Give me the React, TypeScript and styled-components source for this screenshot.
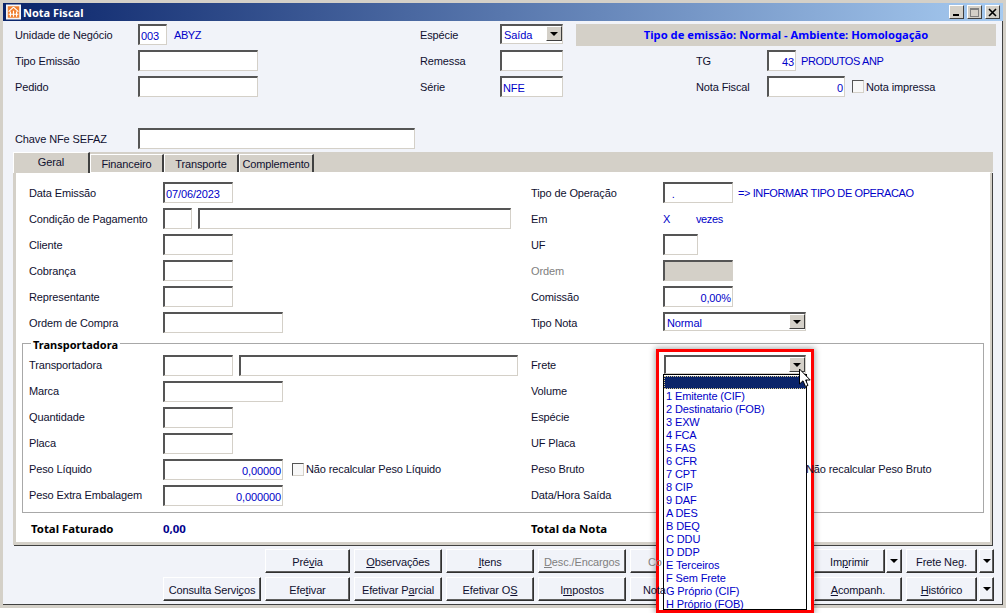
import React from "react";
import styled, { createGlobalStyle } from "styled-components";

const Global = createGlobalStyle`
  html, body { margin: 0; padding: 0; background: #fff; height: 100%; }
  body { font-family: "Liberation Sans", "Noto Sans", sans-serif; font-size: 11px; letter-spacing: -0.12px; color: #101030; overflow: hidden; }
  * { box-sizing: border-box; }
`;

const Win = styled.div`
  position: relative; width: 1006px; height: 608px; background: #f1f3f9;
  border: 3px solid #d4d0c8; box-shadow: inset -1px -1px 0 #404040;
`;
const TitleBar = styled.div`
  display: flex; align-items: center; height: 18px; padding-left: 3px; gap: 2px;
  background: linear-gradient(90deg, #0a246a, #a6caf0);
`;
const TitleText = styled.span`color: #fff; font-family: "Noto Sans", sans-serif; font-weight: 700; font-size: 11px; letter-spacing: 0; flex: 1;`;
const TitleButtons = styled.div`display: flex; gap: 3px; margin-right: 3px;`;
const TitleBtn = styled.div`
  width: 15px; height: 14px; background: #d4d0c8; border: 1px solid; border-color: #fff #404040 #404040 #fff;
  display: flex; align-items: center; justify-content: center;
`;
const HeaderForm = styled.div`padding: 3px 0 0 12px;`;
const HeaderRow = styled.div<{ $h?: number }>`
  display: grid; grid-template-columns: 405px 156px 420px; height: ${p => p.$h ?? 26}px;
`;
const Cell = styled.div`display: flex; align-items: flex-start;`;
const RightCell = styled(Cell)`padding-left: 120px;`;
const Label = styled.div<{ $w: number; $muted?: boolean; $above?: boolean }>`
  width: ${p => p.$w}px; line-height: 23px; flex: none; white-space: nowrap; color: ${p => (p.$muted ? "#808080" : "#101030")};
  ${p => p.$above && "position: relative; z-index: 6;"}
`;
const Field = styled.div<{ $w: number; $right?: boolean; $h?: number; $grey?: boolean; $ml?: number }>`
  width: ${p => p.$w}px; height: ${p => p.$h ?? 21}px; flex: none; margin-left: ${p => p.$ml ?? 0}px;
  background: ${p => (p.$grey ? "#d4d0c8" : "#fff")};
  border: solid; border-color: #555 #d4d0c8 #d4d0c8 #555; border-width: 2px 1px 1px 2px;
  line-height: 20px; padding: 0 1px; color: #0000c8; white-space: nowrap; overflow: hidden;
  text-align: ${p => (p.$right ? "right" : "left")};
`;
const Value = styled.span<{ $ml?: number; $w?: number }>`
  color: #0000c8; line-height: 23px; letter-spacing: -0.4px; white-space: nowrap; margin-left: ${p => p.$ml ?? 0}px;
  ${p => (p.$w ? `width:${p.$w}px;` : "")}
`;
const Select = styled(Field)`
  position: relative; line-height: 18px; padding-left: 2px;
`;
const DropButton = styled.div`
  position: absolute; right: 0; top: 0; width: 16px; height: 15px; background: #d4d0c8;
  border: 1px solid; border-color: #fff #404040 #404040 #fff;
  display: flex; align-items: center; justify-content: center;
`;
const Arrow = styled.i`
  display: block; width: 0; height: 0; border: 4px solid transparent; border-top: 4px solid #000; border-bottom: 0;
`;
const Check = styled.div<{ $ml: number }>`
  width: 12px; height: 13px; flex: none; margin: 4px 2px 0 ${p => p.$ml}px; background: #f8f8f8;
  border: 1px solid; border-color: #555 #d4d0c8 #d4d0c8 #555;
`;
const Banner = styled.div`
  width: 420px; height: 22px; background: #d4d0c8; color: #0000ff; font-family: "Noto Sans", sans-serif; font-weight: 700; font-size: 11.2px;
  letter-spacing: 0; line-height: 22px; text-align: center;
`;
const TabStrip = styled.div`
  display: flex; align-items: flex-end; height: 20px; margin: 0 0 0 10px; width: 980px; background: #d4d0c8;
`;
const Tab = styled.div<{ $w: number; $active?: boolean }>`
  width: ${p => p.$w}px; height: ${p => (p.$active ? 21 : 18)}px; flex: none; text-align: center;
  background: #d4d0c8; border-top: 1px solid #fff; border-left: 1px solid #fff; border-right: 2px solid #404040;
  line-height: 18px; ${p => p.$active && "align-self: flex-start; position: relative; z-index: 1;"}
`;
const Panel = styled.div`
  margin-left: 10px; width: 979px; height: 373px; background: #fff; padding-top: 9px;
  border: solid #d4d0c8; border-width: 1px 2px 3px 3px; box-shadow: 1px 1px 0 #404040;
  border-top-color: #fff;
`;
const FormRow = styled.div`
  display: grid; grid-template-columns: 502px 1fr; height: 26px; padding-left: 13px;
`;
const Group = styled.div`
  position: relative; height: 170px; margin: 5px 6px 0; padding-top: 11px; border: 1px solid #a8a8a8;
`;
const GroupRow = styled(FormRow)`
  padding-left: 6px;
  ${Label} { line-height: 21px; }
`;
const Legend = styled.div`
  position: absolute; left: 8px; top: -6px; background: #fff; padding: 0 2px; font-family: "Noto Sans", sans-serif; font-weight: 700; letter-spacing: 0; line-height: 14px; color: #000;
`;
const Totals = styled(FormRow)`height: 29px; padding-left: 15px; grid-template-columns: 500px 1fr;`;
const Bold = styled.span<{ $w?: number; $blue?: boolean }>`
  font-family: "Noto Sans", sans-serif; font-weight: 700; font-size: 11.4px; letter-spacing: 0; line-height: 31px; white-space: nowrap; color: ${p => (p.$blue ? "#00008c" : "#000")};
  ${p => (p.$w ? `width:${p.$w}px; display:inline-block;` : "")}
`;
const Bar = styled.div`display: flex; flex-direction: column; gap: 4px; margin-top: 4px;`;
const BarRow = styled.div<{ $pl: number }>`display: flex; gap: 4px; height: 24px; padding-left: ${p => p.$pl}px;`;
const Split = styled.div<{ $gap: number }>`display: flex; gap: ${p => p.$gap}px;`;
const Btn = styled.div<{ $w: number; $off?: boolean; $indent?: number }>`
  width: ${p => p.$w}px; height: 24px; background: #f1f3f9; flex: none; white-space: nowrap;
  text-align: ${p => (p.$indent ? "left" : "center")}; padding-left: ${p => p.$indent ?? 0}px;
  border: 1px solid; border-color: #fff #303030 #303030 #fff; box-shadow: inset -1px -1px 0 #606060;
  line-height: 24px; color: ${p => (p.$off ? "#808080" : "#101030")};
`;
const ArrowBtn = styled(Btn)`display: flex; align-items: center; justify-content: center;`;
const OverText = styled.span`position: relative; z-index: 6;`;
const Overlay = styled.div`
  position: absolute; left: 653px; top: 346px; width: 158px; height: 264px; background: #fff; z-index: 5;
  border: 3px solid #f00; box-shadow: 0 0 6px 1px rgba(0,0,0,.35); padding: 3px 0 0 5px;
`;
const List = styled.div`
  width: 144px; margin-left: -1px; border: 1px solid #000; padding-top: 1px; background: #fff; height: 236px;
`;
const Item = styled.div<{ $sel?: boolean }>`
  height: 13px; line-height: 15px; padding-left: 2px; color: #0000c8; white-space: nowrap;
  ${p => p.$sel && "background:#0a246a; outline: 1px dotted #d8c890; outline-offset: -1px;"}
`;
const Cursor = styled.svg`position: absolute; left: 795px; top: 365px; z-index: 6;`;

const frete = ["", "1 Emitente (CIF)", "2 Destinatario (FOB)", "3 EXW", "4 FCA", "5 FAS", "6 CFR", "7 CPT", "8 CIP", "9 DAF", "A DES", "B DEQ", "C DDU", "D DDP", "E Terceiros", "F Sem Frete", "G Próprio (CIF)", "H Próprio (FOB)"];

const Drop = () => <DropButton><Arrow /></DropButton>;

export default function App() {
  return (
    <>
      <Global />
      <Win>
        <TitleBar>
          <svg width="15" height="16" viewBox="0 0 17 17">
            <rect width="17" height="17" fill="#f6f6f6" />
            <rect x="2" y="2" width="13" height="13" fill="#f08030" />
            <path d="M8.5 3 L3 8 M8.5 3 L14 8 M5 8v6 M8.5 7v7 M12 8v6 M3 11h11" stroke="#fff" strokeWidth="1.3" fill="none" />
          </svg>
          <TitleText>Nota Fiscal</TitleText>
          <TitleButtons>
            <TitleBtn><svg width="9" height="9"><rect x="1" y="6" width="6" height="2" fill="#000" /></svg></TitleBtn>
            <TitleBtn><svg width="9" height="9"><rect x="0.5" y="0.5" width="8" height="8" fill="none" stroke="#808080" /><rect x="0" y="0" width="9" height="2" fill="#808080" /></svg></TitleBtn>
            <TitleBtn><svg width="9" height="9"><path d="M1 1 L8 8 M8 1 L1 8" stroke="#000" strokeWidth="1.6" /></svg></TitleBtn>
          </TitleButtons>
        </TitleBar>
        <HeaderForm>
          <HeaderRow>
            <Cell><Label $w={123}>Unidade de Negócio</Label><Field $w={29}>003</Field><Value $ml={7}>ABYZ</Value></Cell>
            <Cell><Label $w={80}>Espécie</Label><Select $w={63} $h={20}>Saída<Drop /></Select></Cell>
            <Cell><Banner>Tipo de emissão: Normal - Ambiente: Homologação</Banner></Cell>
          </HeaderRow>
          <HeaderRow>
            <Cell><Label $w={123}>Tipo Emissão</Label><Field $w={120} /></Cell>
            <Cell><Label $w={80}>Remessa</Label><Field $w={63} /></Cell>
            <RightCell><Label $w={71}>TG</Label><Field $w={29} $right>43</Field><Value $ml={5}>PRODUTOS ANP</Value></RightCell>
          </HeaderRow>
          <HeaderRow>
            <Cell><Label $w={123}>Pedido</Label><Field $w={120} /></Cell>
            <Cell><Label $w={80}>Série</Label><Field $w={63}>NFE</Field></Cell>
            <RightCell><Label $w={71}>Nota Fiscal</Label><Field $w={78} $right>0</Field><Check $ml={7} /><Label $w={80}>Nota impressa</Label></RightCell>
          </HeaderRow>
          <HeaderRow />
          <HeaderRow $h={24}>
            <Cell><Label $w={123}>Chave NFe SEFAZ</Label><Field $w={277} /></Cell>
          </HeaderRow>
        </HeaderForm>
        <TabStrip>
          <Tab $w={77} $active>Geral</Tab>
          <Tab $w={74}>Financeiro</Tab>
          <Tab $w={75}>Transporte</Tab>
          <Tab $w={75}>Complemento</Tab>
        </TabStrip>
        <Panel>
          <FormRow>
            <Cell><Label $w={134}>Data Emissão</Label><Field $w={70}>07/06/2023</Field></Cell>
            <Cell><Label $w={132}>Tipo de Operação</Label><Field $w={70}>&nbsp;&nbsp;.</Field><Value $ml={5}>=&gt; INFORMAR TIPO DE OPERACAO</Value></Cell>
          </FormRow>
          <FormRow>
            <Cell><Label $w={134}>Condição de Pagamento</Label><Field $w={29} /><Field $w={313} $ml={6} /></Cell>
            <Cell><Label $w={132}>Em</Label><Value $w={33}>X</Value><Value>vezes</Value></Cell>
          </FormRow>
          <FormRow>
            <Cell><Label $w={134}>Cliente</Label><Field $w={70} /></Cell>
            <Cell><Label $w={132}>UF</Label><Field $w={35} /></Cell>
          </FormRow>
          <FormRow>
            <Cell><Label $w={134}>Cobrança</Label><Field $w={70} /></Cell>
            <Cell><Label $w={132} $muted>Ordem</Label><Field $w={70} $grey /></Cell>
          </FormRow>
          <FormRow>
            <Cell><Label $w={134}>Representante</Label><Field $w={70} /></Cell>
            <Cell><Label $w={132}>Comissão</Label><Field $w={70} $right>0,00%</Field></Cell>
          </FormRow>
          <FormRow>
            <Cell><Label $w={134}>Ordem de Compra</Label><Field $w={120} /></Cell>
            <Cell><Label $w={132}>Tipo Nota</Label><Select $w={143} $h={19}>Normal<Drop /></Select></Cell>
          </FormRow>
          <Group>
            <Legend>Transportadora</Legend>
            <GroupRow>
              <Cell><Label $w={134}>Transportadora</Label><Field $w={70} /><Field $w={279} $ml={6} /></Cell>
              <Cell><Label $w={132}>Frete</Label></Cell>
            </GroupRow>
            <GroupRow>
              <Cell><Label $w={134}>Marca</Label><Field $w={120} /></Cell>
              <Cell><Label $w={132}>Volume</Label></Cell>
            </GroupRow>
            <GroupRow>
              <Cell><Label $w={134}>Quantidade</Label><Field $w={70} /></Cell>
              <Cell><Label $w={132}>Espécie</Label></Cell>
            </GroupRow>
            <GroupRow>
              <Cell><Label $w={134}>Placa</Label><Field $w={70} /></Cell>
              <Cell><Label $w={132}>UF Placa</Label></Cell>
            </GroupRow>
            <GroupRow>
              <Cell><Label $w={134}>Peso Líquido</Label><Field $w={120} $right>0,00000</Field><Check $ml={9} /><Label $w={150}>Não recalcular Peso Líquido</Label></Cell>
              <Cell><Label $w={132}>Peso Bruto</Label><Field $w={120} $right /><Check $ml={9} /><Label $w={150} $above>Não recalcular Peso Bruto</Label></Cell>
            </GroupRow>
            <GroupRow>
              <Cell><Label $w={134}>Peso Extra Embalagem</Label><Field $w={120} $right>0,000000</Field></Cell>
              <Cell><Label $w={132}>Data/Hora Saída</Label></Cell>
            </GroupRow>
          </Group>
          <Totals>
            <Cell><Bold $w={132}>Total Faturado</Bold><Bold $blue>0,00</Bold></Cell>
            <Cell><Bold>Total da Nota</Bold></Cell>
          </Totals>
        </Panel>
        <Bar>
          <BarRow $pl={262}>
            <Btn $w={85}>Pré<u>v</u>ia</Btn>
            <Btn $w={88}><u>O</u>bservações</Btn>
            <Btn $w={88}><u>I</u>tens</Btn>
            <Btn $w={88} $off><u>D</u>esc./Encargos</Btn>
            <Btn $w={88} $off $indent={17}><OverText>Co</OverText></Btn>
            <Btn $w={88} />
            <Split $gap={1}><Btn $w={71}>Im<u>p</u>rimir</Btn><ArrowBtn $w={16}><Arrow /></ArrowBtn></Split>
            <Split $gap={2}><Btn $w={71}>Frete Ne<u>g</u>.</Btn><ArrowBtn $w={15}><Arrow /></ArrowBtn></Split>
          </BarRow>
          <BarRow $pl={160}>
            <Btn $w={98}>Consulta Servi<u>ç</u>os</Btn>
            <Btn $w={85}>Efe<u>t</u>ivar</Btn>
            <Btn $w={88}>Efetivar P<u>a</u>rcial</Btn>
            <Btn $w={88}>Efetivar O<u>S</u></Btn>
            <Btn $w={88}>I<u>m</u>postos</Btn>
            <Btn $w={88} $indent={12}><OverText>Nota</OverText></Btn>
            <Btn $w={88} />
            <Btn $w={88}><u>A</u>companh.</Btn>
            <Split $gap={2}><Btn $w={71}><u>H</u>istórico</Btn><ArrowBtn $w={15}><Arrow /></ArrowBtn></Split>
          </BarRow>
        </Bar>
        <Overlay>
          <Select $w={142} $h={19}><Drop /></Select>
          <List>
            {frete.map((f, i) => <Item key={i} $sel={i === 0}>{f}</Item>)}
          </List>
        </Overlay>
        <Cursor width="14" height="20" viewBox="0 0 14 20">
          <path d="M1.5 1 V16 L5 12.8 L7.5 18.5 L10 17.4 L7.6 12 H12.2 Z" fill="#fff" stroke="#000" strokeWidth="1" />
        </Cursor>
      </Win>
    </>
  );
}
